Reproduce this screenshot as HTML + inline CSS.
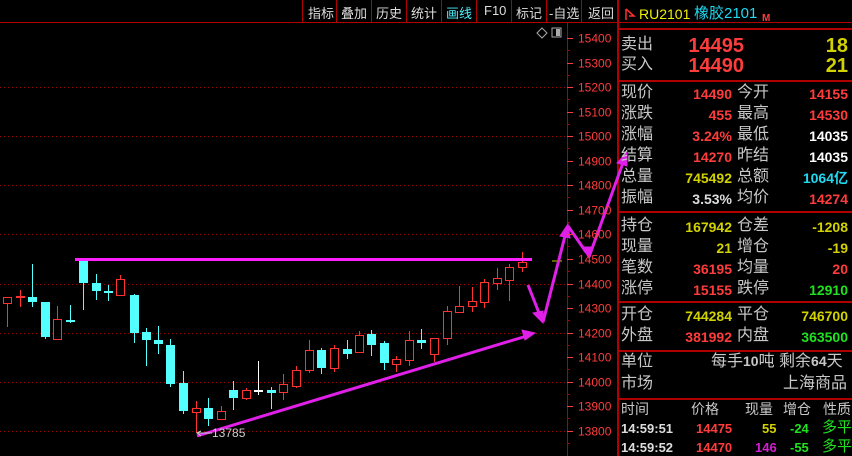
<!DOCTYPE html>
<html><head><meta charset="utf-8"><style>
body{margin:0;background:#000;width:852px;height:456px;overflow:hidden;position:relative;font-family:"Liberation Sans","Noto Sans CJK SC",sans-serif}
.t{position:absolute;white-space:nowrap;line-height:1}
.l{color:#c8c8c8;font-size:16px}
.n{font-weight:bold;font-size:14px;text-align:right}
.r{color:#ff3c3c}.y{color:#d2d200}.w{color:#fff}.g{color:#20e020}.c{color:#20d8f0}.m{color:#d020d0}
.tb{position:absolute;top:3px;color:#ddd;font-size:13px}
.hl{position:absolute;left:618px;width:234px;height:2px;background:#b00000}
</style></head><body>
<svg id="s" width="852" height="456" style="position:absolute;left:0;top:0">
<g id="grid"></g><g id="cd"></g>
<line x1="0" y1="22.5" x2="852" y2="22.5" stroke="#b00000"/>
<line x1="567.5" y1="22" x2="567.5" y2="456" stroke="#b00000"/>
<line x1="618" y1="0" x2="618" y2="456" stroke="#b00000" stroke-width="2"/>
<g stroke="#b00000"><line x1="302.5" y1="0" x2="302.5" y2="22"/><line x1="336.5" y1="0" x2="336.5" y2="22"/><line x1="371.5" y1="0" x2="371.5" y2="22"/><line x1="406.5" y1="0" x2="406.5" y2="22"/><line x1="441.5" y1="0" x2="441.5" y2="22"/><line x1="476.5" y1="0" x2="476.5" y2="22"/><line x1="511.5" y1="0" x2="511.5" y2="22"/><line x1="546.5" y1="0" x2="546.5" y2="22"/><line x1="581.5" y1="0" x2="581.5" y2="22"/></g>
<path d="M537 33 L542 28 L547 33 L542 38 Z" fill="none" stroke="#aaa"/>
<rect x="552" y="28" width="9" height="9" fill="none" stroke="#aaa"/><rect x="556" y="29" width="4" height="7" fill="#aaa"/>
<line x1="552" y1="261" x2="562" y2="261" stroke="#c8c800"/>
<rect x="75" y="258" width="457" height="3" fill="#ff20ff"/>
<g fill="#e020e8" stroke="#e020e8">
<line x1="197" y1="436" x2="530" y2="335" stroke-width="3"/>
<path d="M535 333 L522 330 L525 340 Z"/>
<line x1="528" y1="285" x2="541" y2="318" stroke-width="3"/>
<path d="M543 323 L533 313 L543 311 Z"/>
<line x1="543" y1="322" x2="566" y2="232" stroke-width="3"/>
<path d="M568 224 L560 236 L570 238 Z"/>
<line x1="568" y1="226" x2="586" y2="252" stroke-width="3"/>
<path d="M589 258 L582 247 L591 247 Z"/>
<line x1="589" y1="257" x2="624" y2="160" stroke-width="3"/>
<path d="M627 152 L617 163 L627 166 Z"/>
</g>
<path d="M201 431 L197 433 L201 436 M197 433 L212 433" stroke="#ccc" fill="none"/>
<text x="212" y="437" fill="#ccc" font-size="12" font-family="Liberation Sans">13785</text>
<g id="ax" font-family="Liberation Sans" font-size="12" fill="#ff3c3c"></g>
</svg>
<script>
var ns="http://www.w3.org/2000/svg";
function el(p,t,a){var e=document.createElementNS(ns,t);for(var k in a)e.setAttribute(k,a[k]);p.appendChild(e);return e;}
function Y(p){return 38+(15400-p)*0.2456;}
var grid=document.getElementById('grid'),ax=document.getElementById('ax');
for(var p=15400;p>=13800;p-=100){var y=Math.round(Y(p))+0.5;
 el(ax,'line',{x1:567,y1:y,x2:573,y2:y,stroke:'#ff3c3c'});
 el(ax,'line',{x1:567,y1:y+12,x2:570,y2:y+12,stroke:'#b00000'});
 var tx=el(ax,'text',{x:578,y:y+4});tx.textContent=p;
 if(p%200==0&&p<15400) el(grid,'line',{x1:0,y1:y,x2:567,y2:y,stroke:'#a00000','stroke-dasharray':'1 3'});}
var C=[[7,297,303,297,327,'r'],[20,296,298,290,307,'x'],[32,297,302,264,307,'c'],[45,302,337,302,339,'c'],[57,319,339,306,339,'r'],[70,320,322,305,323,'c'],[83,260,283,260,310,'c'],[96,283,291,274,300,'c'],[108,291,293,285,301,'c'],[120,279,295,275,295,'r'],[134,295,333,294,343,'c'],[146,332,340,328,366,'c'],[158,340,344,326,354,'c'],[170,345,384,339,387,'c'],[183,383,411,371,414,'c'],[196,408,412,401,433,'r'],[208,408,419,398,426,'c'],[221,411,419,406,419,'r'],[233,390,398,381,410,'c'],[246,390,398,388,400,'r'],[258,390,391,361,395,'w'],[271,390,393,387,409,'c'],[283,384,392,374,400,'r'],[296,370,386,366,388,'r'],[309,350,370,340,373,'r'],[321,350,368,348,374,'c'],[334,348,368,345,372,'r'],[347,349,354,340,359,'c'],[359,335,352,331,352,'r'],[371,334,345,330,356,'c'],[384,343,363,341,370,'c'],[396,359,364,356,372,'r'],[409,340,360,331,366,'r'],[421,340,343,329,349,'c'],[434,338,354,338,362,'r'],[447,311,338,306,345,'r'],[459,306,312,286,312,'r'],[472,301,306,287,312,'r'],[484,282,302,279,308,'r'],[497,278,283,268,290,'r'],[509,267,280,264,301,'r'],[522,262,267,252,272,'r']];
var cd=document.getElementById('cd');
C.forEach(function(c){var x=c[0],col=c[5]=='c'?'#54ffff':c[5]=='w'?'#fff':'#ff3232';
 el(cd,'line',{x1:x+0.5,y1:c[3],x2:x+0.5,y2:c[4],stroke:col});
 var h=Math.max(1,c[2]-c[1]);
 if(c[5]=='r') el(cd,'rect',{x:x-3.5,y:c[1]+0.5,width:8,height:h,fill:'#000',stroke:col});
 else el(cd,'rect',{x:x-4,y:c[1],width:9,height:Math.max(2,h),fill:col});});
</script>
<div class="tb" style="left:308px">指标</div><div class="tb" style="left:341px">叠加</div><div class="tb" style="left:376px">历史</div><div class="tb" style="left:411px">统计</div><div class="tb c" style="left:446px;color:#50f0ff">画线</div><div class="tb" style="left:484px">F10</div><div class="tb" style="left:516px">标记</div><div class="tb" style="left:549px">-自选</div><div class="tb" style="left:588px">返回</div>

<svg style="position:absolute;left:624px;top:8px" width="12" height="14"><path d="M2 1 L2 12 M2 1 L10 8 L5 8" stroke="#ff3030" fill="none" stroke-width="1.5"/></svg>
<div class="t y" style="left:639px;top:7px;font-size:14px;color:#f0f000">RU2101</div>
<div class="t c" style="left:694px;top:6px;font-size:15px">橡胶2101</div>
<div class="t r" style="left:762px;top:14px;font-size:10px;font-weight:bold">M</div>
<div class="hl" style="top:28px"></div>
<div class="t l" style="left:621px;top:37px">卖出</div><div class="t n r" style="left:640px;width:104px;top:36px;font-size:20px">14495</div><div class="t n y" style="left:790px;width:58px;top:36px;font-size:20px">18</div>
<div class="t l" style="left:621px;top:57px">买入</div><div class="t n r" style="left:640px;width:104px;top:56px;font-size:20px">14490</div><div class="t n y" style="left:790px;width:58px;top:56px;font-size:20px">21</div>
<div class="hl" style="top:80px"></div>
<div id="rows"></div>
<script>
var R=[[85,'现价','14490','r','今开','14155','r'],[106,'涨跌','455','r','最高','14530','r'],[127,'涨幅','3.24%','r','最低','14035','w'],[148,'结算','14270','r','昨结','14035','w'],[169,'总量','745492','y','总额','1064亿','c'],[190,'振幅','3.53%','l2','均价','14274','r'],[218,'持仓','167942','y','仓差','-1208','y'],[239,'现量','21','y','增仓','-19','y'],[260,'笔数','36195','r','均量','20','r'],[281,'涨停','15155','r','跌停','12910','g'],[307,'开仓','744284','y','平仓','746700','y'],[328,'外盘','381992','r','内盘','363500','g']];
var h='';R.forEach(function(r){
h+='<div class="t l" style="left:621px;top:'+r[0]+'px">'+r[1]+'</div>'+
'<div class="t n '+r[3]+'" style="left:660px;width:72px;top:'+(r[0]+2)+'px;'+(r[3]=='l2'?'color:#ddd':'')+'">'+r[2]+'</div>'+
'<div class="t l" style="left:737px;top:'+r[0]+'px">'+r[4]+'</div>'+
'<div class="t n '+r[6]+'" style="left:770px;width:78px;top:'+(r[0]+2)+'px">'+r[5]+'</div>';});
document.getElementById('rows').innerHTML=h;
</script>
<div class="hl" style="top:211px"></div>
<div class="hl" style="top:301px"></div>
<div class="hl" style="top:350px"></div>
<div class="t l" style="left:621px;top:354px">单位</div><div class="t l" style="left:711px;top:354px">每手<b style="font-size:14px">10</b>吨 剩余<b style="font-size:14px">64</b>天</div>
<div class="t l" style="left:621px;top:376px">市场</div><div class="t l" style="left:783px;top:376px">上海商品</div>
<div class="hl" style="top:398px"></div>
<div class="t l" style="left:621px;top:402px;font-size:14px">时间</div><div class="t l" style="left:691px;top:402px;font-size:14px">价格</div><div class="t l" style="left:745px;top:402px;font-size:14px">现量</div><div class="t l" style="left:783px;top:402px;font-size:14px">增仓</div><div class="t l" style="left:823px;top:402px;font-size:14px">性质</div>
<div class="t n" style="left:621px;top:422px;color:#ddd;font-size:13px">14:59:51</div><div class="t n r" style="left:696px;top:422px;font-size:13px">14475</div><div class="t n y" style="left:762px;top:422px;font-size:13px">55</div><div class="t n g" style="left:790px;top:422px;font-size:13px">-24</div><div class="t g" style="left:822px;top:420px;font-size:15px">多平</div>
<div class="t n" style="left:621px;top:441px;color:#ddd;font-size:13px">14:59:52</div><div class="t n r" style="left:696px;top:441px;font-size:13px">14470</div><div class="t n m" style="left:755px;top:441px;font-size:13px">146</div><div class="t n g" style="left:790px;top:441px;font-size:13px">-55</div><div class="t g" style="left:822px;top:439px;font-size:15px">多平</div>
</body></html>
